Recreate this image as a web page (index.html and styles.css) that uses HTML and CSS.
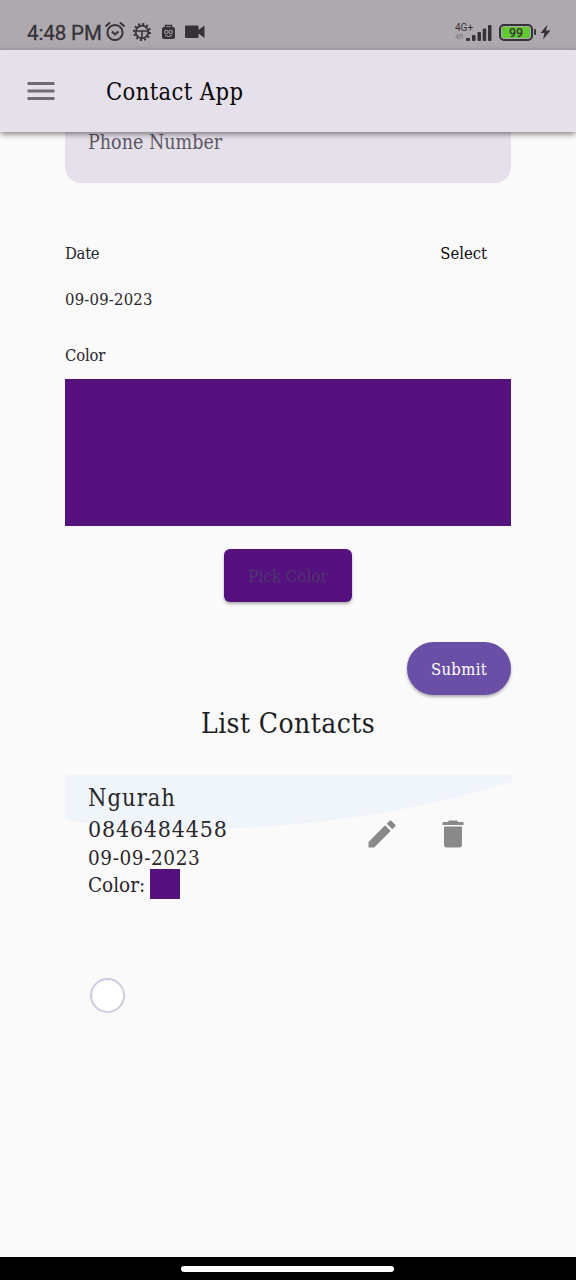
FILE: index.html
```
<!DOCTYPE html>
<html lang="en">
<head>
<meta charset="utf-8">
<title>Contact App</title>
<link rel="stylesheet" href="styles.css">
</head>
<body>
<div class="screen">
  <div class="status">
    <span class="clock">4:48 PM</span>
    <svg class="status-left" width="104" height="22" viewBox="0 0 104 22" fill="none" stroke="#353238">
      <g stroke-width="2"><circle cx="11" cy="11.500" r="7.600"/><path d="M1.500 5.500 6 1.500M20.500 5.500 16 1.500"/><path d="m8 10.500 3 3 3.500-3"/></g>
      <g transform="translate(38 11)"><circle r="8" stroke-dasharray="2 2.190" stroke-width="2"/><circle r="6.300" stroke-width="1.800"/><path d="M-6-1H6M0-1V6" stroke-width="1.600"/></g>
      <path d="M61.500 7V4.500h6V7" stroke-width="1.500"/>
      <rect x="58" y="6" width="13" height="12" rx="2" fill="#353238" stroke="none"/>
      <circle cx="62.300" cy="11" r="1.800" stroke="#aea9ae"/><circle cx="66.700" cy="11" r="1.800" stroke="#aea9ae"/><path d="M61 14.500q3.500 2 7 0" stroke="#aea9ae"/>
      <path d="M82 4.500h11.500q1 0 1 1v3.500l6-4.500v12.500l-6-4.500v3.500q0 1-1 1H82q-1 0-1-1V5.500q0-1 1-1Z" fill="#353238" stroke="none"/>
    </svg>
    <div class="network"><span>4G+</span><small>4ℏ</small></div>
    <svg class="bars" width="26" height="18" viewBox="0 0 26 18" fill="#353238"><rect y="14" width="4" height="3" rx="1"/><rect x="6" y="11" width="3.500" height="6" rx="1"/><rect x="11.500" y="8" width="3.500" height="9" rx="1"/><rect x="16.700" y="4.500" width="3.500" height="12.500" rx="1"/><rect x="22" y="1" width="3.500" height="16" rx="1"/></svg>
    <div class="battery">99</div>
    <i class="battery-tip"></i>
    <svg class="bolt" width="11" height="16" viewBox="0 0 11 16"><path d="M7.500.5.500 9h4L3 15.500 10.500 6.500H6Z" fill="#353238"/></svg>
  </div>
  <header class="appbar">
    <svg width="28" height="18" viewBox="0 0 28 18" fill="#716a76"><path d="M.500 0H27.500V3H.500ZM.500 7.500H27.500V10.500H.500ZM.500 15H27.500V18H.500Z"/></svg>
    <h1 class="title">Contact App</h1>
  </header>
  <main class="content">
    <div class="field">Phone Number</div>
    <div class="row date-head"><span class="t-date">Date</span><span class="select">Select</span></div>
    <div class="row date-value">09-09-2023</div>
    <div class="row color-label">Color</div>
    <div class="preview"></div>
    <button class="pick">Pick Color</button>
    <button class="submit">Submit</button>
    <h2 class="heading">List Contacts</h2>
    <article class="contact">
      <svg class="ripple" width="447" height="54" viewBox="0 0 447 54"><path d="M0 0H447V7Q325 45 185 52.500Q80 58 0 45Z" fill="#eff5fb"/></svg>
      <div class="info">
        <div class="name">Ngurah</div>
        <div class="phone">0846484458</div>
        <div class="when">09-09-2023</div>
        <div class="chosen"><span>Color:</span><i class="swatch"></i></div>
      </div>
      <svg class="edit" width="36" height="36" viewBox="0 0 24 24"><path fill="#898989" d="M3 17.250V21h3.750L17.810 9.940l-3.750-3.750L3 17.250zM20.710 7.040a1 1 0 0 0 0-1.410l-2.340-2.340a1 1 0 0 0-1.410 0l-1.830 1.830 3.750 3.750 1.830-1.830z"/></svg>
      <svg class="trash" width="36" height="36" viewBox="0 0 24 24"><path fill="#898989" d="M6 19a2 2 0 0 0 2 2h8a2 2 0 0 0 2-2V7H6v12zM19 4h-3.500l-1-1h-5l-1 1H5v2h14V4z"/></svg>
    </article>
    <div class="touch"></div>
  </main>
  <footer class="nav"><i class="handle"></i></footer>
</div>
</body>
</html>
```
FILE: styles.css
```
* { box-sizing: border-box; }
body { margin: 0; }
.screen {
  width: 576px; height: 1280px; overflow: hidden;
  display: flex; flex-direction: column;
  background: #fbfafb; color: #29272c;
  font-family: "Roboto Slab", "DejaVu Serif Condensed", "DejaVu Serif", serif;
  font-stretch: condensed;
}
.status {
  height: 50px; flex: none; display: flex; align-items: flex-start;
  padding: 21px 0 0 27px; background: #aea9ae; color: #353238;
  font-family: Roboto, sans-serif; font-stretch: normal;
}
.clock { width: 77px; font-size: 20.500px; line-height: 24px; font-weight: 400; white-space: nowrap; -webkit-text-stroke: .3px #353238; letter-spacing: -.1px; }
.network { margin-left: 247px; width: 18px; font-size: 10px; line-height: 11px; margin-top: 1px; }
.network span, .network small { display: block; white-space: nowrap; }
.network small { font-size: 7px; line-height: 9px; color: #77727a; }
.bars { margin: 3px 0 0 -7px; }
.battery {
  width: 34px; height: 17px; margin: 3px 0 0 7px; border: 2px solid #353238; border-radius: 5px;
  background: #62c834; box-shadow: inset 0 0 0 1px #aea9ae;
  font-size: 12.500px; line-height: 13px; font-weight: 500; text-align: center;
}
.battery-tip { width: 2px; height: 6px; margin: 8px 0 0 1px; background: #353238; border-radius: 1px; }
.bolt { margin: 3px 0 0 4px; }
.appbar {
  height: 82px; flex: none; display: flex; align-items: center; padding-left: 27px;
  position: relative; z-index: 1; background: #e6e0eb; box-shadow: 0 2px 6px rgba(0,0,0,.5);
}
.title { margin: 2px 0 0 51px; font-size: 23.500px; line-height: 32px; font-weight: 400; letter-spacing: .4px; color: #09080a; }
.content { flex: 1; display: flex; flex-direction: column; padding: 0 65px; width: 576px; }
.field {
  height: 51px; padding: 0 23px; background: #e6e0eb; border-radius: 0 0 16px 16px;
  font-size: 19.500px; line-height: 21px; color: #5d5762;
}
.row { height: 24px; font-size: 16.500px; line-height: 25px; display: flex; justify-content: space-between; }
.date-head { margin-top: 58px; padding-right: 24px; }
.t-date { letter-spacing: -.3px; }
.select { color: #0c0b0e; }
.date-value { margin-top: 22px; justify-content: flex-start; letter-spacing: .2px; }
.color-label { margin-top: 32px; justify-content: flex-start; letter-spacing: -.2px; }
.preview { height: 147px; margin-top: 12px; background: #55117e; width: 446px; }
.pick, .submit { border: 0; padding: 2px 0 0; height: 53px; font: inherit; font-size: 16.500px; line-height: 24px; box-shadow: 0 2px 3px rgba(0,0,0,.3); white-space: nowrap; }
.pick { width: 128px; margin: 23px auto 0; border-radius: 6px; background: #55117e; color: #4d376b; letter-spacing: .15px; }
.submit { width: 104px; margin: 40px 0 0; align-self: flex-end; border-radius: 27px; background: #6950a6; color: #fff; letter-spacing: .35px; }
.heading { margin: 9px 0 0; height: 38px; font-size: 28px; line-height: 39px; font-weight: 400; letter-spacing: .4px; text-align: center; color: #201e22; }
.contact { height: 125px; margin-top: 33px; display: flex; position: relative; padding-left: 23px; }
.ripple { position: absolute; left: 0; top: 0; }
.info { width: 276px; position: relative; white-space: nowrap; color: #29272c; }
.name { margin-top: 6px; font-size: 23.500px; line-height: 34px; letter-spacing: 1px; }
.phone { font-size: 23px; line-height: 28px; letter-spacing: .8px; }
.when { font-size: 20.500px; line-height: 30px; height: 29px; letter-spacing: .6px; }
.chosen { display: flex; font-size: 20.500px; line-height: 33px; height: 30px; margin-top: -3px; }
.swatch { width: 30px; height: 30px; margin-left: 5px; background: #55117e; }
.edit { margin: 41px 0 0 0; position: relative; }
.trash { margin: 41px 0 0 35px; position: relative; }
.touch { width: 35px; height: 35px; margin: 78px 0 0 25px; border: 2.500px solid #cccbe0; border-radius: 50%; background: #fff; }
.nav { height: 23px; flex: none; background: #000; display: flex; justify-content: center; padding: 9px 1px 0 0; }
.handle { width: 213px; height: 6px; border-radius: 3px; background: #fff; }
```
